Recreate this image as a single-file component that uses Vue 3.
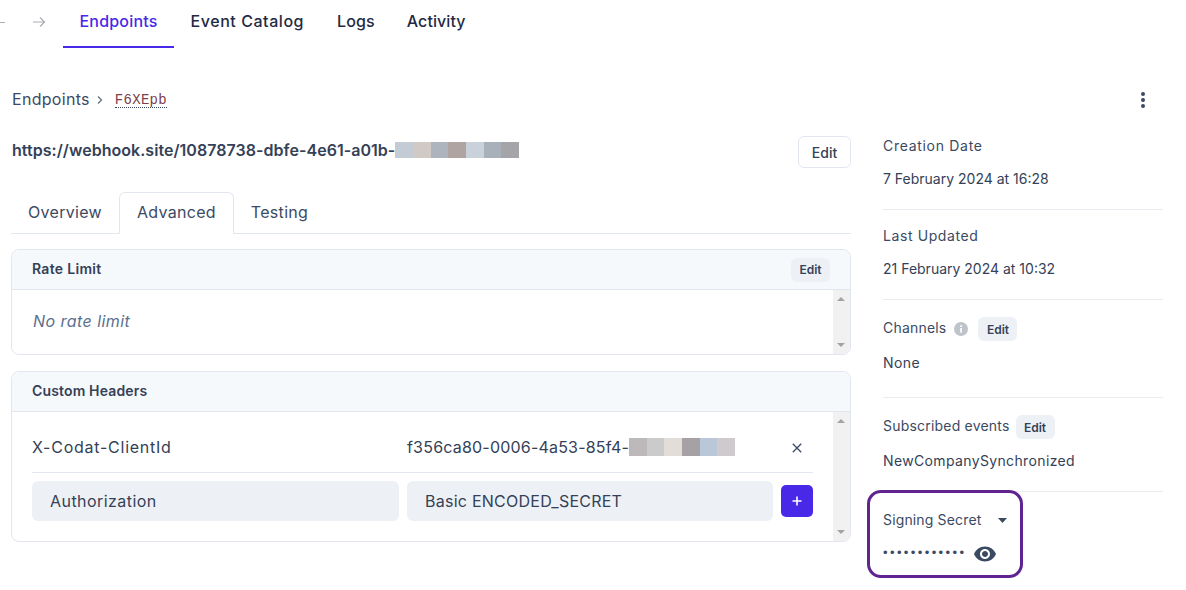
<script setup>
const navItems = [
  { label: 'Endpoints', active: true },
  { label: 'Event Catalog' },
  { label: 'Logs' },
  { label: 'Activity' },
]
const urlBlur = ['#c3ccd5', '#d0c9c6', '#adb4bd', '#b0a4a3', '#c9d2da', '#a8b0ba', '#a5a4a8']
const idBlur = ['#bdb8b9', '#cbcbcb', '#e2ddd8', '#a6a1a5', '#b9c7d8', '#cfcace']
</script>

<template>
  <div class="page">
    <nav class="nav">
      <div class="history">
        <span class="back"></span>
        <svg class="arrow" width="14" height="12" viewBox="0 0 14 12" fill="none" stroke="#a9adb3" stroke-width="1.2">
          <path d="M1 6h11.5M8 1.5 12.5 6 8 10.5" />
        </svg>
      </div>
      <a v-for="item in navItems" :key="item.label" class="nav-item" :class="{ active: item.active }">{{ item.label }}</a>
    </nav>

    <div class="crumbs">
      <span class="crumb">Endpoints</span>
      <svg class="chev" width="8" height="10" viewBox="0 0 8 10" fill="none" stroke="#66707f" stroke-width="1.3">
        <path d="M2 1.5 5.5 5 2 8.5" />
      </svg>
      <code class="id">F6XEpb</code>
      <svg class="kebab" width="4" height="16" viewBox="0 0 4 16" fill="#3b4a63">
        <circle cx="2" cy="2" r="2" /><circle cx="2" cy="8" r="2" /><circle cx="2" cy="14" r="2" />
      </svg>
    </div>

    <div class="content">
      <main class="left">
        <div class="url-row">
          <div class="url">
            <span>https://webhook.site/10878738-dbfe-4e61-a01b-</span>
            <span class="blur"><i v-for="c in urlBlur" :key="c" :style="{ background: c }"></i></span>
          </div>
          <button class="btn-outline">Edit</button>
        </div>

        <div class="tabs">
          <span class="tab">Overview</span>
          <span class="tab selected">Advanced</span>
          <span class="tab">Testing</span>
        </div>

        <section class="card rate">
          <header class="card-head">
            <span class="title-rate">Rate Limit</span>
            <button class="btn-soft">Edit</button>
          </header>
          <div class="card-body">
            <div class="card-main empty">No rate limit</div>
            <div class="scroll"><b class="up"></b><b class="down"></b></div>
          </div>
        </section>

        <section class="card headers">
          <header class="card-head"><span class="title-headers">Custom Headers</span></header>
          <div class="card-body">
            <div class="card-main list">
              <div class="hrow">
                <span class="hkey">X-Codat-ClientId</span>
                <span class="hval">
                  <span>f356ca80-0006-4a53-85f4-</span>
                  <span class="blur small"><i v-for="c in idBlur" :key="c" :style="{ background: c }"></i></span>
                </span>
                <svg class="close" width="10" height="10" viewBox="0 0 10 10" fill="none" stroke="#3b4a63" stroke-width="1.3">
                  <path d="M.8.8l8.4 8.4M9.2.8.8 9.2" />
                </svg>
              </div>
              <div class="inputs">
                <div class="input key">Authorization</div>
                <div class="input val">Basic ENCODED_SECRET</div>
                <button class="add" aria-label="Add">
                  <svg width="10" height="10" viewBox="0 0 10 10" fill="none" stroke="#fff" stroke-width="1.6">
                    <path d="M5 .5v9M.5 5h9" />
                  </svg>
                </button>
              </div>
            </div>
            <div class="scroll"><b class="up"></b><b class="down"></b></div>
          </div>
        </section>
      </main>

      <aside class="side">
        <div class="block b1">
          <div class="label">Creation Date</div>
          <div class="value">7 February 2024 at 16:28</div>
        </div>
        <div class="block b2">
          <div class="label">Last Updated</div>
          <div class="value">21 February 2024 at 10:32</div>
        </div>
        <div class="block b3">
          <div class="label-row">
            <span class="label">Channels</span>
            <svg class="info" width="14" height="14" viewBox="0 0 14 14">
              <circle cx="7" cy="7" r="7" fill="#bfc4cb" />
              <rect x="6.2" y="6" width="1.7" height="4.6" fill="#fff" />
              <rect x="6.2" y="3.3" width="1.7" height="1.7" fill="#fff" />
            </svg>
            <button class="btn-soft">Edit</button>
          </div>
          <div class="value">None</div>
        </div>
        <div class="block b4">
          <div class="label-row">
            <span class="label">Subscribed events</span>
            <button class="btn-soft">Edit</button>
          </div>
          <div class="value">NewCompanySynchronized</div>
        </div>
        <div class="signing">
          <div class="sign-head">
            <span class="label">Signing Secret</span>
            <svg class="caret" width="9" height="5" viewBox="0 0 9 5" fill="#3b4a63"><path d="M0 0h9L4.5 5z" /></svg>
          </div>
          <div class="secret">
            <span class="dots">••••••••••••</span>
            <svg class="eye" width="24" height="24" viewBox="0 0 24 24" fill="#3b4a63">
              <path d="M12 4.5C7 4.5 2.73 7.61 1 12c1.73 4.39 6 7.5 11 7.5s9.27-3.11 11-7.5c-1.73-4.39-6-7.5-11-7.5zM12 17c-2.76 0-5-2.24-5-5s2.24-5 5-5 5 2.24 5 5-2.24 5-5 5zm0-8c-1.66 0-3 1.34-3 3s1.34 3 3 3 3-1.34 3-3-1.34-3-3-3z" />
            </svg>
          </div>
          <div class="highlight"></div>
        </div>
      </aside>
    </div>
  </div>
</template>

<style>
html, body { margin: 0; background: #fff; }
</style>

<style scoped>
.page {
  width: 1186px;
  height: 590px;
  overflow: hidden;
  background: #fff;
  color: #344157;
  font-family: Inter, "Open Sans", sans-serif;
  font-size: 14px;
  box-sizing: border-box;
}
.nav { display: flex; height: 48px; }
.history { width: 63px; display: flex; align-items: center; padding-bottom: 4px; box-sizing: border-box; }
.back { width: 5px; height: 1px; background: #a9adb3; }
.arrow { margin-left: 27px; }
.nav-item {
  padding: 0 16.5px;
  line-height: 43px;
  font-size: 16px;
  letter-spacing: 0.2px;
  color: #1f2a44;
  font-weight: 450;
  box-sizing: border-box;
  height: 48px;
  border-bottom: 2px solid transparent;
  white-space: nowrap;
}
.nav-item:nth-of-type(2) { letter-spacing: 0.55px; }
.nav-item:nth-of-type(3) { letter-spacing: 0.1px; }
.nav-item:nth-of-type(4) { letter-spacing: 0.1px; margin-left: -1px; }
.nav-item.active { color: #4a28e8; border-bottom-color: #4a28e8; }

.crumbs {
  display: flex;
  align-items: center;
  height: 24px;
  margin-top: 40px;
  padding-left: 12px;
  padding-right: 41px;
}
.crumb { font-size: 16px; color: #3b4a63; letter-spacing: 0.3px; margin-bottom: 2px; }
.chev { margin: 0 11px 0 6px; }
.id {
  font-family: "Liberation Mono", monospace;
  font-size: 14px;
  letter-spacing: 0.3px;
  color: #7b3f4b;
  border-bottom: 1px dotted #3b4a63;
  line-height: 14px;
}
.kebab { margin-left: auto; }

.content { display: flex; margin-top: 24px; padding-left: 11px; }
.left { width: 840px; flex: none; }
.url-row { display: flex; align-items: center; justify-content: space-between; height: 32px; }
.url {
  display: flex;
  align-items: center;
  font-size: 16px;
  font-weight: 600;
  letter-spacing: 0.04px;
  padding-left: 1px;
  margin-bottom: 4px;
  color: #344157;
  white-space: nowrap;
}
.blur { display: flex; height: 16px; }
.blur i { width: 17.7px; height: 100%; display: block; }
.blur.small { height: 18px; }
button { font-family: inherit; cursor: pointer; }
.btn-outline {
  width: 53px;
  height: 32px;
  padding: 0;
  border: 1px solid #e2e6ef;
  border-radius: 6px;
  background: #fff;
  font-size: 14px;
  font-weight: 500;
  color: #344157;
}
.tabs {
  display: flex;
  height: 42px;
  margin-top: 24px;
  margin-bottom: 15px;
  box-sizing: border-box;
  border-bottom: 1px solid #e2e6ef;
}
.tab {
  padding: 0 17px;
  line-height: 40px;
  font-size: 16px;
  letter-spacing: 0.3px;
  color: #3b4a63;
  white-space: nowrap;
  box-sizing: border-box;
}
.tab.selected {
  height: 42px;
  line-height: 38px;
  background: #fff;
  border: 1px solid #e2e6ef;
  border-bottom: 1px solid #fff;
  border-radius: 6px 6px 0 0;
}

.card {
  border: 1px solid #e2e6ef;
  border-radius: 8px;
  overflow: hidden;
  box-sizing: border-box;
  display: flex;
  flex-direction: column;
}
.card.rate { height: 106px; margin-bottom: 16px; }
.card.headers { height: 171px; }
.card-head {
  height: 40px;
  flex: none;
  box-sizing: border-box;
  border-bottom: 1px solid #e2e6ef;
  background: #f6f9fc;
  display: flex;
  align-items: center;
  justify-content: space-between;
  padding: 0 20px;
  font-size: 14px;
  font-weight: 600;
  color: #344157;
}
.title-rate { letter-spacing: 0.3px; margin-bottom: 2px; }
.title-headers { letter-spacing: 0.15px; margin-bottom: 2px; }
.btn-soft {
  width: 39px;
  height: 24px;
  padding: 0;
  border: 0;
  border-radius: 6px;
  background: #edf1f6;
  font-size: 12px;
  font-weight: 600;
  color: #344157;
}
.card-body { flex: 1; display: flex; min-height: 0; }
.card-main { flex: 1; min-width: 0; }
.empty {
  padding: 21px 21px;
  font-size: 16px;
  font-style: italic;
  line-height: 20px;
  letter-spacing: 0.45px;
  color: #5c7090;
}
.scroll {
  width: 17px;
  flex: none;
  background: #f1f1f1;
  display: flex;
  flex-direction: column;
  justify-content: space-between;
  padding: 7px 0 7px 4px;
  box-sizing: border-box;
}
.scroll b { display: block; width: 0; height: 0; border-left: 4px solid transparent; border-right: 4px solid transparent; }
.scroll .up { border-bottom: 4px solid #a3a3a3; }
.scroll .down { border-top: 4px solid #a3a3a3; }
.list { padding: 0 20px; }
.hrow {
  height: 61px;
  padding-top: 10px;
  box-sizing: border-box;
  border-bottom: 1px solid #e2e6ef;
  display: flex;
  align-items: center;
  font-size: 16px;
  color: #344157;
}
.hkey { width: 375px; flex: none; letter-spacing: 0.75px; }
.hval { display: flex; align-items: center; width: 385px; flex: none; white-space: nowrap; letter-spacing: 0.2px; }
.close { margin-top: 2px; }
.inputs { display: flex; align-items: center; gap: 8px; margin-top: 8px; }
.input {
  height: 40px;
  line-height: 40px;
  background: #edf1f5;
  border-radius: 6px;
  padding-left: 18px;
  box-sizing: border-box;
  font-size: 16px;
  color: #344157;
}
.input.key { width: 367px; letter-spacing: 0.45px; }
.input.val { width: 366px; letter-spacing: 0.25px; }
.add {
  width: 32px;
  height: 32px;
  padding: 0;
  border: 0;
  border-radius: 5px;
  background: #4a28e8;
  display: flex;
  align-items: center;
  justify-content: center;
}

.side { width: 280px; margin-left: 32px; flex: none; }
.block { border-bottom: 1px solid #e9ecf1; box-sizing: border-box; }
.label { line-height: 20px; font-size: 14px; color: #3b4a63; white-space: nowrap; }
.value { line-height: 20px; font-size: 14px; color: #344157; white-space: nowrap; }
.label-row { display: flex; align-items: center; height: 24px; }
.label-row .label { margin-bottom: 2px; }
.b1 { height: 74px; }
.b1 .label { letter-spacing: 0.7px; }
.b1 .value { margin-top: 13px; }
.b2 { height: 90px; padding-top: 16px; }
.b2 .label { letter-spacing: 0.6px; }
.b2 .value { margin-top: 13px; }
.b3 { height: 98px; padding-top: 17px; }
.b3 .label { letter-spacing: 0.2px; }
.b3 .value { margin-top: 12px; letter-spacing: 0.4px; }
.b3 .info { margin: 0 10px 0 8px; }
.b4 { height: 94px; padding-top: 17px; }
.b4 .label { letter-spacing: 0.2px; }
.b4 .value { margin-top: 12px; letter-spacing: 0.36px; }
.b4 .btn-soft { margin-left: 6px; }
.signing { position: relative; padding-top: 18px; }
.sign-head { display: flex; align-items: center; }
.sign-head .label { letter-spacing: 0.15px; }
.caret { margin-left: 17px; }
.secret { display: flex; align-items: center; margin-top: 12px; height: 24px; }
.dots { font-family: "Liberation Sans", sans-serif; font-size: 13px; letter-spacing: 2.4px; width: 90px; white-space: nowrap; color: #3b4a63; margin-top: -3px; }
.highlight {
  position: absolute;
  left: -16px;
  top: -2px;
  width: 156px;
  height: 88px;
  box-sizing: border-box;
  border: 3px solid #5f2490;
  border-radius: 14px;
  pointer-events: none;
}
</style>
